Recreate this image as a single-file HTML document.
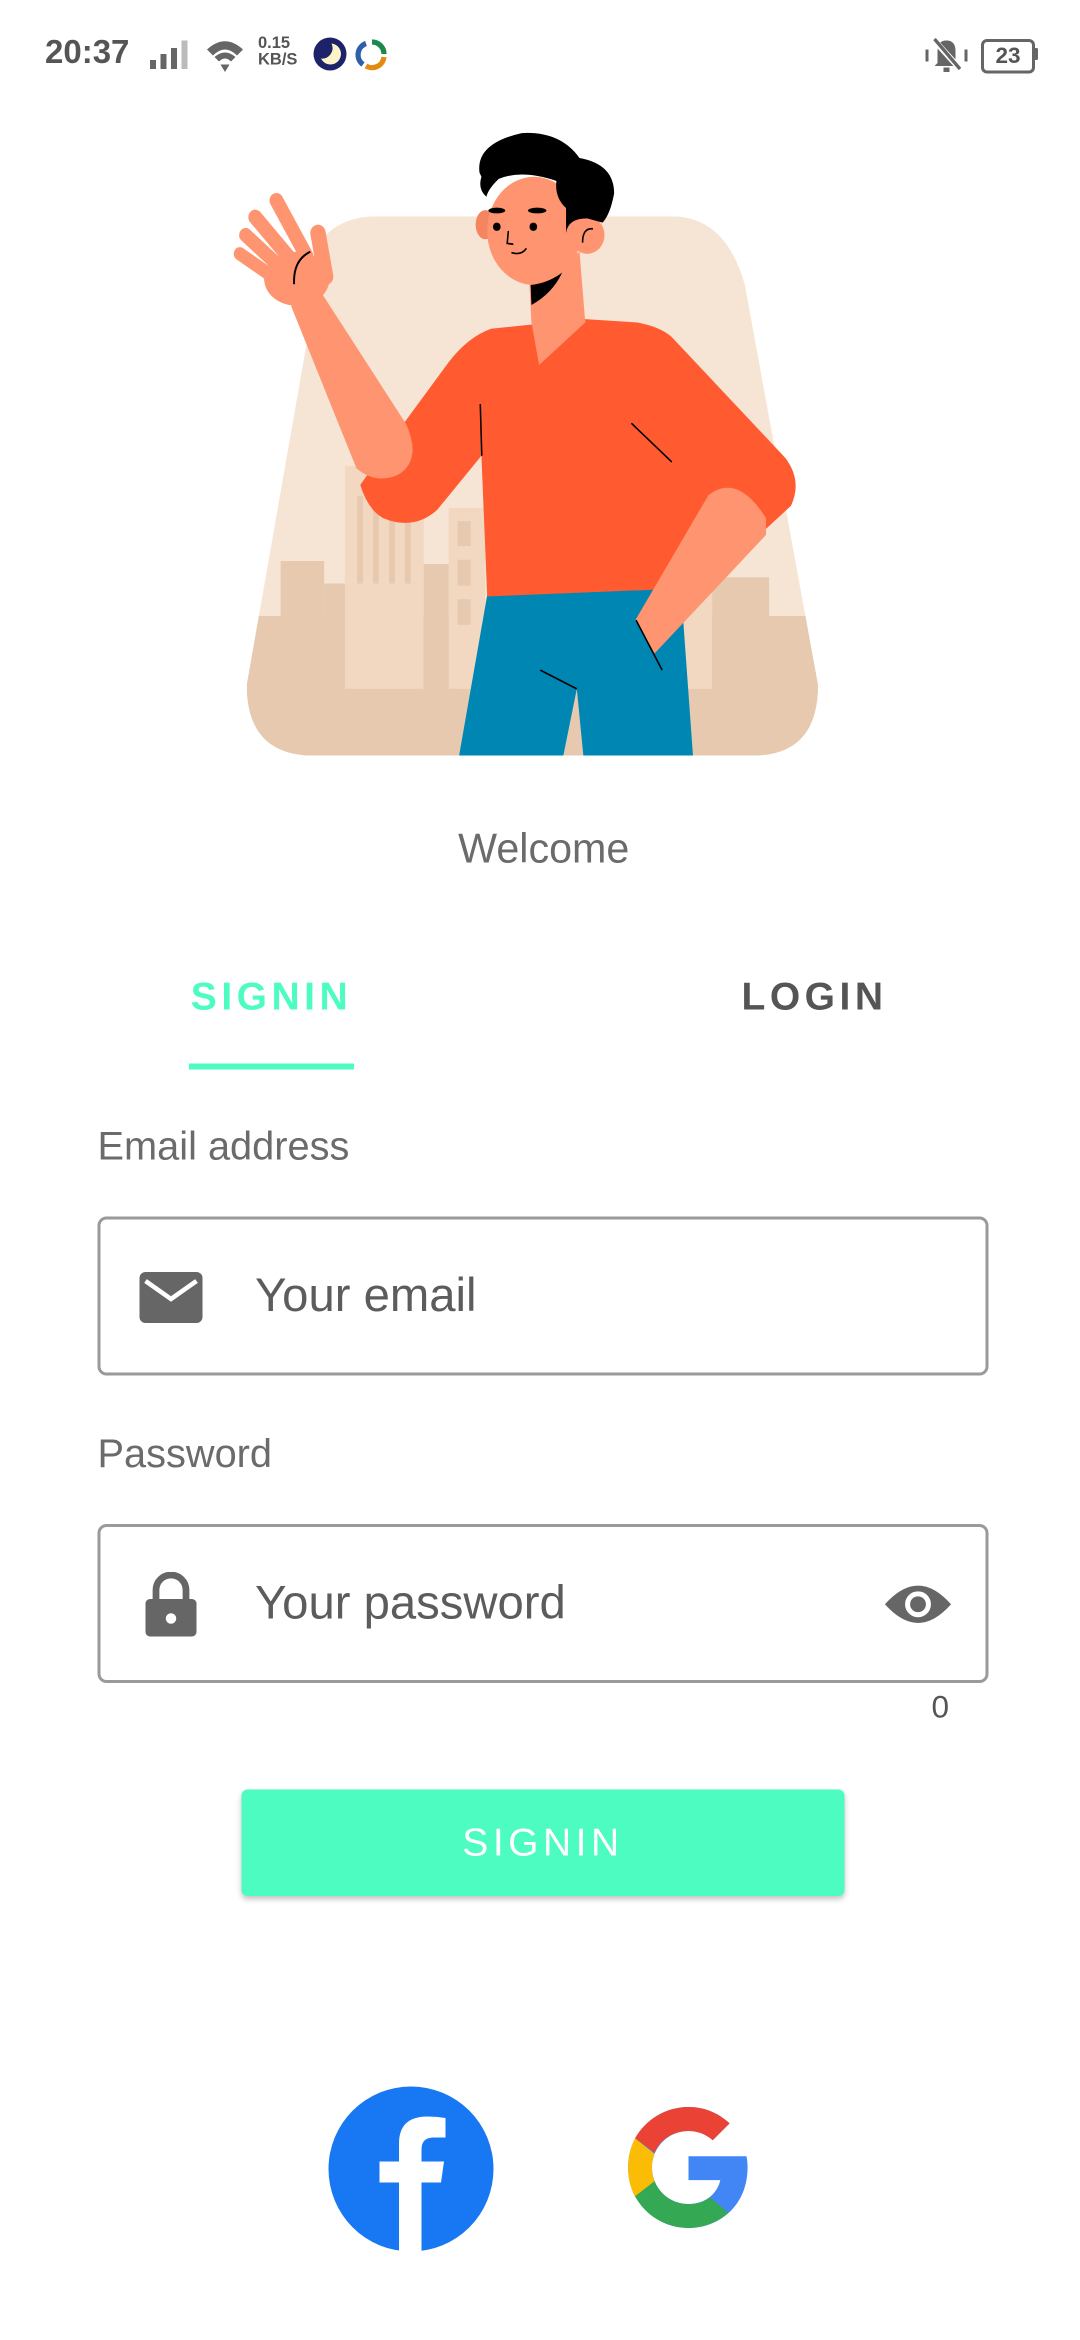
<!DOCTYPE html>
<html><head><meta charset="utf-8"><style>
html,body{margin:0;padding:0;background:#fff;width:1080px;height:2340px;overflow:hidden}
#w{position:absolute;left:0;top:0;width:720px;height:1560px;transform:scale(1.5);transform-origin:0 0;font-family:"Liberation Sans",sans-serif}
.a{position:absolute}
.box{position:absolute;left:65px;width:590px;height:102px;border:2px solid #9a9a9a;border-radius:6px}
.lbl{position:absolute;left:65px;font-size:26.5px;color:#6b6b6b}
.ph{position:absolute;left:103px;top:0;line-height:100px;font-size:31.5px;color:#5c5c5c}
</style></head><body><div id="w">
<!-- status bar -->
<div class="a" style="left:30px;top:22px;font-size:22px;color:#555;font-weight:bold">20:37</div>
<svg class="a" style="left:99px;top:27px" width="30" height="20"><rect x="1" y="13" width="4" height="6" fill="#666"/><rect x="8" y="9" width="4" height="10" fill="#666"/><rect x="15" y="5" width="4" height="14" fill="#666"/><rect x="22" y="0" width="4" height="19" fill="#bbb"/></svg>
<svg class="a" style="left:136px;top:24px" width="28" height="26" viewBox="0 0 28 26"><path d="M2 9 Q14 -2 26 9 L22 13 Q14 5 6 13Z M7 14 Q14 8 21 14 L18 17 Q14 13 10 17Z M11 19 L17 19 L14 24Z" fill="#666"/></svg>
<div class="a" style="left:172px;top:24px;font-size:11px;line-height:11px;color:#555;font-weight:bold">0.15<br>KB/S</div>
<svg class="a" style="left:208px;top:24px" width="60" height="26"><circle cx="12" cy="12" r="11" fill="#1d2368"/><path d="M13 5 A7 7 0 1 1 6 15 A7 7 0 0 0 13 5Z" fill="#fdf3c8"/><path d="M36 5 A8 8 0 0 0 34 19" stroke="#2f5fa8" stroke-width="3.5" fill="none"/><path d="M40 4 A8 8 0 0 1 48 12" stroke="#1a8a4a" stroke-width="3.5" fill="none"/><path d="M48 14 A8 8 0 0 1 36 20" stroke="#e38a10" stroke-width="3.5" fill="none"/></svg>
<svg class="a" style="left:616px;top:24px" width="30" height="26"><path d="M9 18 L9 10 Q9 3 15 3 Q21 3 21 10 L21 18 L23 20 L7 20Z M13 21 h4 v3 h-4z" fill="#666"/><line x1="6" y1="2" x2="25" y2="23" stroke="#fff" stroke-width="4"/><line x1="7" y1="2" x2="24" y2="22" stroke="#666" stroke-width="2.2"/><path d="M2 9v8 M28 9v8" stroke="#666" stroke-width="2"/></svg>
<div class="a" style="left:654px;top:26px;width:32px;height:19px;border:2px solid #666;border-radius:4px;font-size:15px;line-height:19px;text-align:center;color:#555;font-weight:bold;box-sizing:content-box">23</div>
<div class="a" style="left:689px;top:32px;width:3px;height:8px;background:#666;border-radius:1px"></div>

<!-- illustration -->
<svg class="a" style="left:153px;top:79px" width="400" height="433" viewBox="0 0 1560 1560" preserveAspectRatio="none">
<defs><clipPath id="c"><path d="M250 280 Q300 235 380 235 L1150 235 Q1290 235 1340 400 L1530 1360 Q1530 1530 1360 1530 L220 1530 Q45 1530 45 1360 Z"/></clipPath></defs>
<g clip-path="url(#c)">
<rect x="0" y="0" width="1560" height="1560" fill="#f6e5d4"/>
<rect x="0" y="1195" width="1560" height="400" fill="#e6c9ae"/>
<rect x="133" y="1063" width="113" height="200" fill="#e6c9ae"/>
<rect x="246" y="1117" width="60" height="200" fill="#e6c9ae"/>
<rect x="300" y="835" width="205" height="535" fill="#f2d8c0"/>
<rect x="332" y="907" width="15" height="210" fill="#e6c9ae"/><rect x="373" y="907" width="15" height="210" fill="#e6c9ae"/><rect x="415" y="907" width="15" height="210" fill="#e6c9ae"/><rect x="456" y="907" width="15" height="210" fill="#e6c9ae"/>
<rect x="505" y="1070" width="65" height="300" fill="#e6c9ae"/>
<rect x="570" y="935" width="95" height="435" fill="#f2d8c0"/>
<rect x="593" y="967" width="34" height="60" fill="#e6c9ae"/><rect x="593" y="1060" width="34" height="62" fill="#e6c9ae"/><rect x="593" y="1155" width="34" height="61" fill="#e6c9ae"/>
<rect x="1150" y="880" width="105" height="490" fill="#f2d8c0"/>
<rect x="1163" y="907" width="15" height="210" fill="#e6c9ae"/><rect x="1205" y="907" width="15" height="210" fill="#e6c9ae"/>
<rect x="1255" y="1102" width="148" height="300" fill="#e6c9ae"/>
<rect x="0" y="1370" width="1560" height="200" fill="#e6c9ae"/>
</g>
<polygon points="670,1145 1105,1130 1180,1210 1205,1530 920,1530 903,1370 868,1530 597,1530" fill="#0086b3"/>
<polygon points="780,400 910,320 925,490 805,592 785,490" fill="#fe9470"/>
<path d="M680 505 L925 482 L1060 490 Q1120 500 1150 525 L1445 815 Q1490 870 1460 930 L1390 990 L1150 1060 L1150 1130 L670 1148 L655 810 L540 940 Q480 990 400 960 Q360 940 340 880 L455 730 L570 585 Q620 525 680 505 Z" fill="#ff5a30"/>
<polygon points="805,592 925,490 925,482 785,490" fill="#fe9470"/>
<path d="M160 450 L240 420 L460 735 Q500 820 440 855 Q380 880 330 840 Z" fill="#fe9470"/>
<g stroke="#fe9470" stroke-linecap="round" fill="none"><line x1="122" y1="197" x2="200" y2="330" stroke-width="36"/><line x1="67" y1="237" x2="165" y2="345" stroke-width="36"/><line x1="42" y1="280" x2="135" y2="360" stroke-width="34"/><line x1="27" y1="325" x2="105" y2="375" stroke-width="32"/><line x1="230" y1="275" x2="250" y2="380" stroke-width="40"/></g>
<ellipse cx="175" cy="385" rx="85" ry="65" fill="#fe9470"/>
<path d="M210 320 Q165 340 168 398" stroke="#000" stroke-width="5" fill="none"/>
<path d="M1245 905 Q1320 850 1395 960 L1395 1000 L1105 1285 L1055 1205 Z" fill="#fe9470"/>
<ellipse cx="665" cy="255" rx="25" ry="35" fill="#f5855f"/>
<ellipse cx="792" cy="270" rx="122" ry="130" fill="#fe9470"/>
<circle cx="930" cy="280" r="45" fill="#fe9470"/>
<path d="M945 265 Q918 262 918 298" stroke="#000" stroke-width="4" fill="none"/>
<path d="M650 130 Q640 60 760 35 Q860 30 910 95 Q1000 110 1000 180 Q990 230 970 250 L930 240 Q880 240 875 275 L875 215 Q845 190 850 150 Q760 122 700 145 Q672 170 668 188 Q645 170 655 140 Z" fill="#000"/>
<path d="M783 400 Q830 395 865 370 Q840 420 785 448 Z" fill="#000"/>
<circle cx="695" cy="260" r="10" fill="#000"/><circle cx="790" cy="260" r="10" fill="#000"/>
<ellipse cx="695" cy="221" rx="22" ry="7" fill="#000"/><ellipse cx="800" cy="221" rx="24" ry="7" fill="#000"/>
<path d="M725 270 L722 300 L738 302 M733 322 Q758 330 772 312" stroke="#000" stroke-width="4" fill="none"/>
<g stroke="#000" stroke-width="4"><line x1="652" y1="686" x2="656" y2="810"/><line x1="1045" y1="732" x2="1150" y2="825"/><line x1="808" y1="1325" x2="903" y2="1370"/><line x1="1057" y1="1205" x2="1125" y2="1325"/></g>
</svg>

<div class="a" style="left:0;width:725px;top:550px;text-align:center;font-size:27.5px;color:#6b6b6b">Welcome</div>
<div class="a" style="left:81px;width:200px;top:649px;text-align:center;font-size:26px;font-weight:bold;letter-spacing:3px;color:#4dfcc0">SIGNIN</div>
<div class="a" style="left:443px;width:200px;top:649px;text-align:center;font-size:26px;font-weight:bold;letter-spacing:3px;color:#555">LOGIN</div>
<div class="a" style="left:126px;top:709px;width:110px;height:4px;background:#4dfcc0"></div>

<div class="lbl" style="top:749px">Email address</div>
<div class="box" style="top:811px">
<svg class="a" style="left:26px;top:35px" width="42" height="34" viewBox="0 0 42 34"><rect x="0" y="0" width="42" height="34" rx="4" fill="#666"/><path d="M4 6 L21 18 L38 6" stroke="#fff" stroke-width="3" fill="none"/></svg>
<div class="ph">Your email</div></div>

<div class="lbl" style="top:954px">Password</div>
<div class="box" style="top:1016px">
<svg class="a" style="left:29px;top:30px" width="36" height="44" viewBox="0 0 36 44"><path d="M8 18 V12 A10 10 0 0 1 28 12 V18" stroke="#666" stroke-width="4.5" fill="none"/><rect x="1" y="18" width="34" height="25" rx="3" fill="#666"/><circle cx="18" cy="31" r="3.5" fill="#fff"/></svg>
<div class="ph">Your password</div>
<svg class="a" style="left:522px;top:38px" width="46" height="27" viewBox="0 0 48 28"><path d="M1 14 Q24 -12 47 14 Q24 40 1 14Z" fill="#666"/><circle cx="24" cy="14" r="9" fill="#fff"/><circle cx="24" cy="14" r="5.5" fill="#666"/></svg>
</div>
<div class="a" style="left:621px;top:1127px;font-size:21px;color:#555">0</div>

<div class="a" style="left:161px;top:1193px;width:402px;height:71px;background:#4dfcc0;border-radius:4px;box-shadow:0 2px 4px rgba(0,0,0,.25);text-align:center;line-height:71px;color:#fff;font-size:26px;letter-spacing:3px">SIGNIN</div>

<svg class="a" style="left:219px;top:1391px" width="110" height="110" viewBox="0 0 110 110"><circle cx="55" cy="55" r="55" fill="#1877f2"/><path d="M47 110 V64 H34 V50 H47 V38 Q47 20 66 20 Q72 20 78 21 V34 H70 Q62 34 62 42 V50 H77 L75 64 H62 V110Z" fill="#fff"/></svg>
<svg class="a" style="left:414px;top:1400px" width="90" height="90" viewBox="0 0 48 48"><path d="M43.6 20H24v8.5h11.3C34.2 33.5 29.8 37 24 37c-7.2 0-13-5.8-13-13s5.8-13 13-13c3.3 0 6.3 1.2 8.6 3.3l6-6C34.6 4.6 29.6 2.5 24 2.5 12.1 2.5 2.5 12.1 2.5 24S12.1 45.5 24 45.5c11 0 21-8 21-21.5 0-1.3-.1-2.7-.4-4z" fill="#4285f4"/><path d="M5 13.6l7 5.1C13.8 14.1 18.5 11 24 11c3.3 0 6.3 1.2 8.6 3.3l6-6C34.6 4.6 29.6 2.5 24 2.5 15.8 2.5 8.7 7.1 5 13.6z" fill="#ea4335"/><path d="M24 45.5c5.5 0 10.4-2 14.2-5.4l-6.6-5.5C29.6 36.1 27 37 24 37c-5.7 0-10.4-3.5-12.2-8.5l-7 5.4C8.4 40.8 15.6 45.5 24 45.5z" fill="#34a853"/><path d="M5 13.6C3.4 16.7 2.5 20.2 2.5 24s.9 7.3 2.4 10.3l7-5.4C11.3 27.4 11 25.7 11 24s.3-3.4.9-4.9z" fill="#fbbc05"/></svg>
</div></body></html>
